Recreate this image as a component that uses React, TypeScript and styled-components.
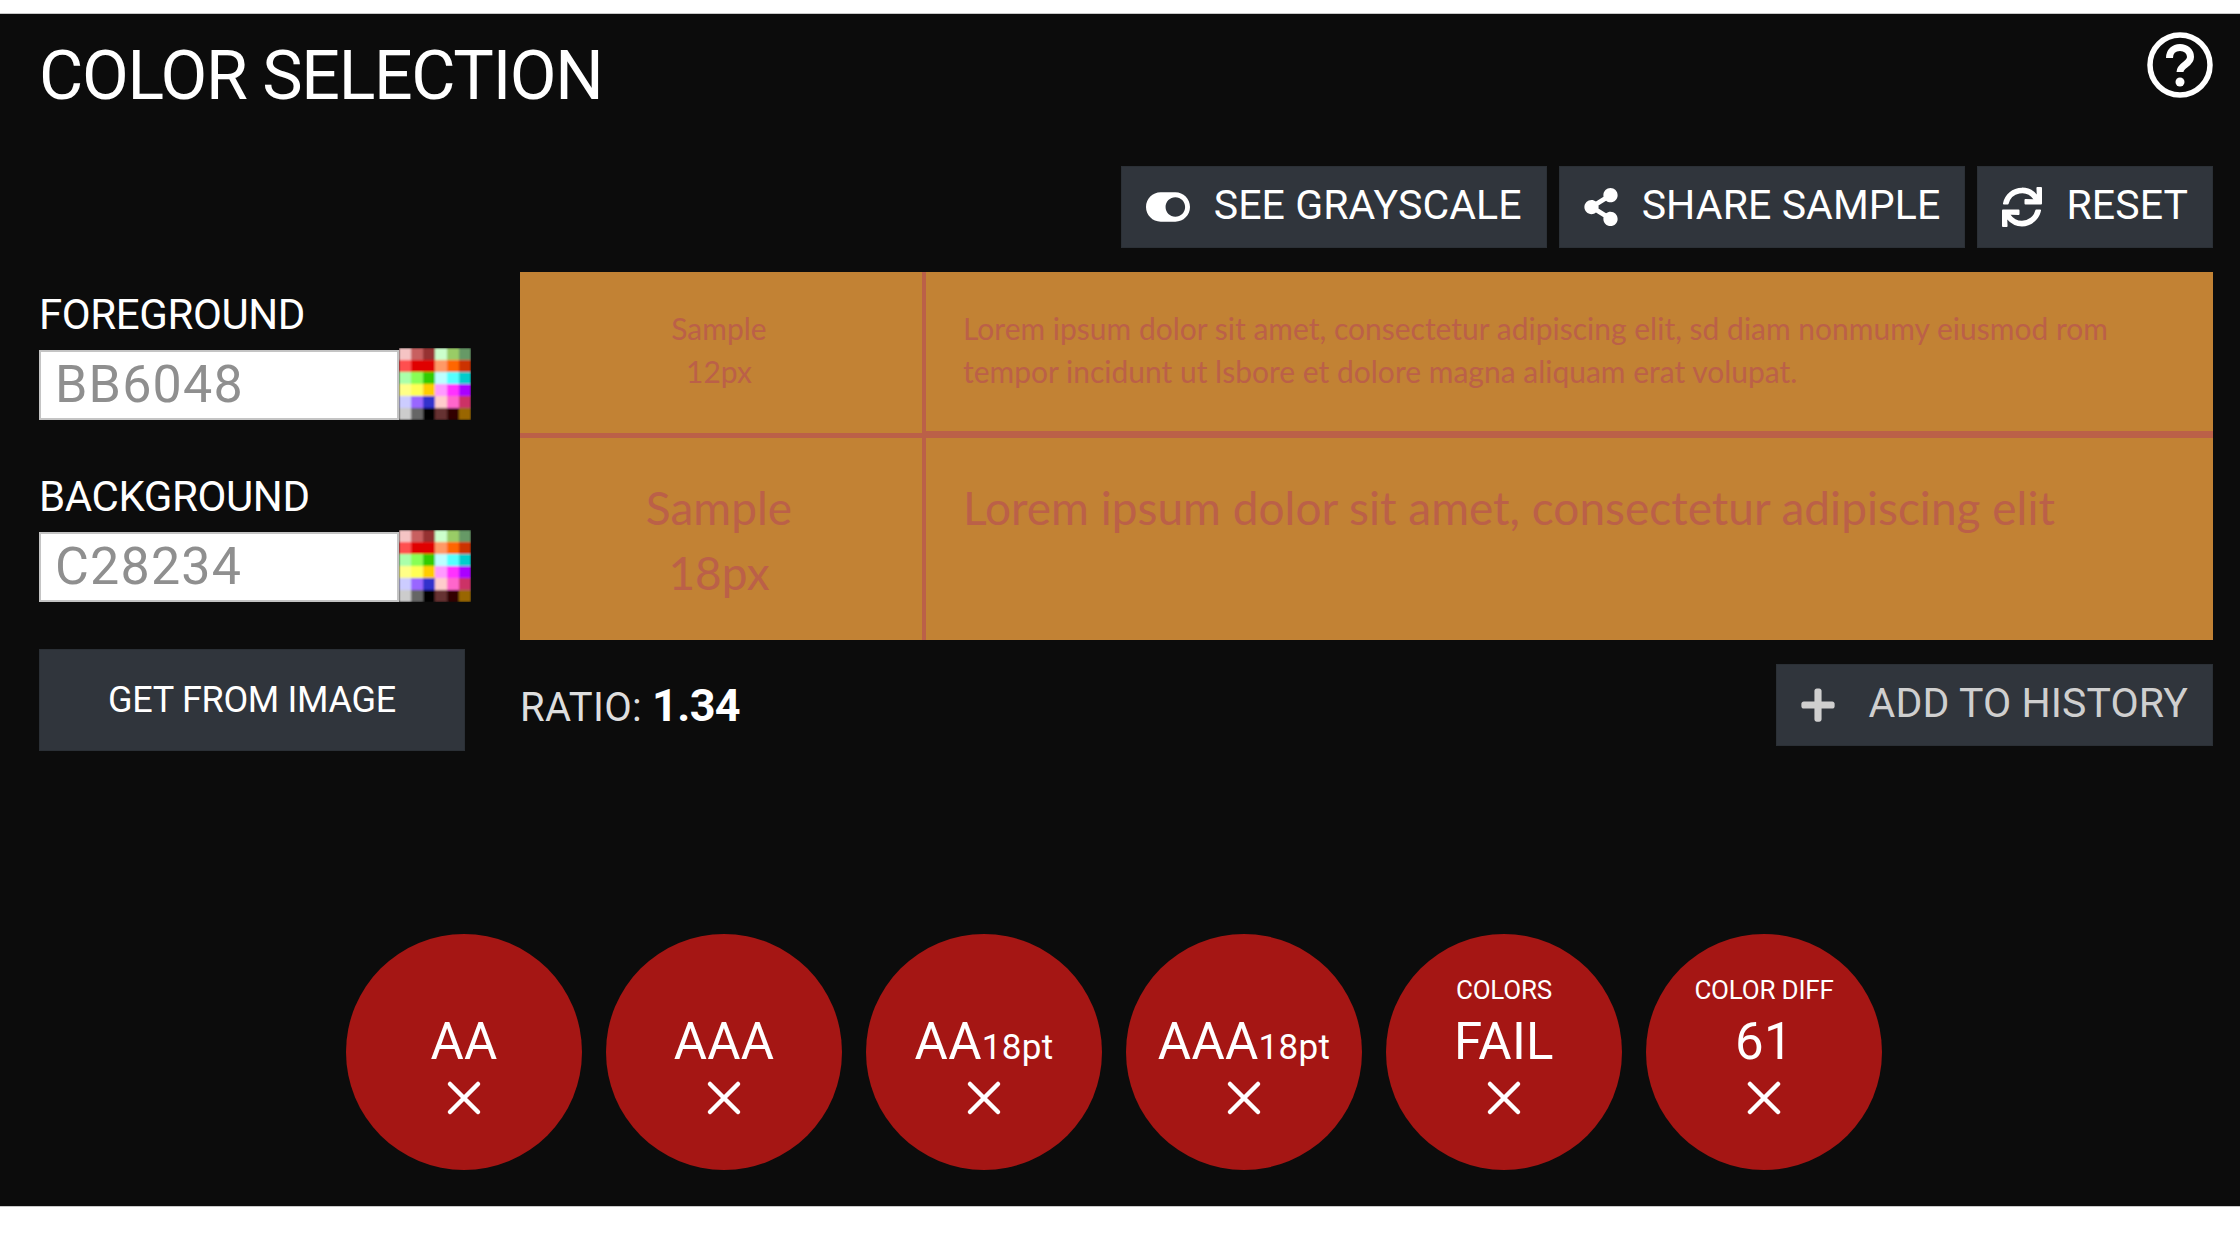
import React from "react";
import styled, { createGlobalStyle } from "styled-components";
import { FaToggleOn, FaShareAlt, FaSync, FaPlus } from "react-icons/fa";

const FONT = `"Roboto", "Liberation Sans", sans-serif`;
const SAMPLE_FONT = `"Lato", "Liberation Sans", sans-serif`;
const FG = "#bb6048";
const BG = "#c28234";

const GlobalStyle = createGlobalStyle`
  html, body {
    margin: 0;
    background: #ffffff;
    font-family: ${FONT};
  }
  * { box-sizing: border-box; }
`;

const Panel = styled.main`
  margin-top: 13px;
  height: 1194px;
  padding: 0 27px 0 39px;
  display: flex;
  flex-direction: column;
  background: #0c0c0c;
  border-top: 1px solid #c8c8c8;
  border-bottom: 1px solid #c8c8c8;
  color: #ffffff;
`;

const Header = styled.header`
  height: 152px;
  display: flex;
  justify-content: space-between;
  align-items: flex-start;
`;

const Title = styled.h1`
  margin: 27px 0 0;
  font-size: 68px;
  line-height: 70px;
  font-weight: 400;
  letter-spacing: -1.3px;
`;

const HelpLink = styled.a`
  display: block;
  width: 66px;
  height: 66px;
  margin-top: 18px;
  color: #ffffff;
`;

const Toolbar = styled.div`
  height: 82px;
  margin-bottom: 24px;
  display: flex;
  justify-content: flex-end;
  gap: 12px;
`;

const ActionButton = styled.button<{ $muted?: boolean; $lead?: number; $gap?: number }>`
  height: 82px;
  padding: 0 24px 4px ${(props) => props.$lead ?? 24}px;
  display: flex;
  align-items: center;
  gap: ${(props) => props.$gap ?? 24}px;
  border: 1px solid #2b3036;
  background: #30353c;
  color: ${(props) => (props.$muted ? "#cfcfcf" : "#ffffff")};
  font-family: ${FONT};
  font-size: 41px;
  font-weight: 400;
  letter-spacing: 0.1px;
  svg {
    flex: none;
    margin-top: 4px;
  }
`;

const Workspace = styled.section`
  display: flex;
  gap: 49px;
`;

const Sidebar = styled.div`
  width: 432px;
  flex: none;
  padding-top: 20px;
  display: flex;
  flex-direction: column;
  gap: 54px;
`;

const Field = styled.div``;

const FieldLabel = styled.label`
  display: block;
  height: 56px;
  font-size: 42px;
  line-height: 46px;
  letter-spacing: -0.4px;
`;

const FieldRow = styled.div`
  height: 72px;
  display: flex;
`;

const ColorInput = styled.input`
  width: 360px;
  height: 70px;
  margin-top: 2px;
  padding: 0 14px 2px;
  border: 2px solid #c4c4c4;
  background: #ffffff;
  color: #8f8f8f;
  font-family: ${FONT};
  font-size: 52px;
  letter-spacing: 1.2px;
  outline: none;
`;

const ImageButton = styled.button`
  width: 426px;
  height: 102px;
  margin-top: -7px;
  border: 1px solid #2b3036;
  background: #30353c;
  color: #ffffff;
  font-family: ${FONT};
  font-size: 36px;
  letter-spacing: -0.3px;
`;

const Main = styled.div`
  flex: 1;
  min-width: 0;
`;

const Sample = styled.div`
  height: 368px;
  background: ${BG};
  color: ${FG};
  font-family: ${SAMPLE_FONT};
`;

const SampleRow = styled.div<{ $large?: boolean }>`
  height: ${(props) => (props.$large ? "202px" : "166px")};
  display: grid;
  grid-template-columns: 406px 1fr;
  font-size: ${(props) => (props.$large ? "46px" : "30px")};
  line-height: ${(props) => (props.$large ? "65px" : "43px")};
`;

const SizeCell = styled.div<{ $large?: boolean }>`
  padding: ${(props) => (props.$large ? "37px" : "35px")} 4px 0 0;
  text-align: center;
  border-right: 4px solid ${FG};
  border-bottom: ${(props) => (props.$large ? "0" : `5px solid ${FG}`)};
`;

const TextCell = styled.div<{ $large?: boolean }>`
  padding: ${(props) => (props.$large ? "37px" : "35px")} 20px 0 37px;
  border-bottom: ${(props) => (props.$large ? "0" : `7px solid ${FG}`)};
`;

const ResultBar = styled.div`
  margin-top: 24px;
  display: flex;
  justify-content: space-between;
  align-items: center;
`;

const Ratio = styled.div`
  font-size: 40px;
  color: #dedede;
  letter-spacing: 0.3px;
  strong {
    margin-left: 10px;
    color: #ffffff;
    font-size: 45px;
    font-weight: 700;
    letter-spacing: -0.6px;
  }
`;

const Badges = styled.section`
  margin-top: 183px;
  padding-right: 24px;
  display: flex;
  justify-content: center;
  gap: 24px;
`;

const Badge = styled.div`
  width: 236px;
  height: 236px;
  position: relative;
  display: flex;
  flex-direction: column;
  align-items: center;
  border-radius: 50%;
  background: #a51614;
  color: #ffffff;
`;

const BadgeCaption = styled.div`
  position: absolute;
  top: 41px;
  font-size: 26px;
  line-height: 30px;
  letter-spacing: -0.2px;
`;

const BadgeValue = styled.div`
  margin-top: 79px;
  height: 58px;
  font-size: 51px;
  line-height: 58px;
  letter-spacing: 0.3px;
  small {
    font-size: 35px;
  }
`;

const FailMark = styled.svg`
  margin-top: 9px;
  width: 36px;
  height: 36px;
  color: #ffffff;
`;

const SWATCHES = [
  ["#f5c4c4", "#c86060", "#963232", "#ccffcc", "#99cc66", "#669966"],
  ["#ff5050", "#e00000", "#e00000", "#ff9966", "#ff6600", "#cc3300"],
  ["#aaffaa", "#88ff55", "#33cc00", "#bbffff", "#55ffff", "#00cccc"],
  ["#ffff88", "#ffff55", "#ffcc00", "#ff99ff", "#ff33ff", "#aa00ff"],
  ["#ccccff", "#9966ff", "#3333cc", "#ffcccc", "#ff66cc", "#cc3366"],
  ["#cccccc", "#666666", "#000000", "#663333", "#330000", "#996600"],
];

const Swatches = ({ id }: { id: string }) => (
  <svg width="72" height="72" viewBox="0 0 72 72">
    <filter id={id}>
      <feGaussianBlur stdDeviation="1.2" />
    </filter>
    <g filter={`url(#${id})`}>
      {SWATCHES.map((row, y) =>
        row.map((color, x) => (
          <rect key={`${x}-${y}`} x={x * 12} y={y * 12} width="12" height="12" fill={color} />
        ))
      )}
    </g>
  </svg>
);

const HelpIcon = () => (
  <svg viewBox="0 0 66 66" width="66" height="66" fill="none" stroke="currentColor">
    <circle cx="33" cy="33" r="30" strokeWidth="5.500" />
    <path d="M22.500 26c0-6.500 4.500-10.500 10.500-10.500S43.500 19.500 43.500 25c0 7.500-10.500 8-10.500 15" strokeWidth="7" />
    <circle cx="33" cy="50" r="4.500" fill="currentColor" stroke="none" />
  </svg>
);

const BADGES = [
  { value: "AA" },
  { value: "AAA" },
  { value: "AA", small: "18pt" },
  { value: "AAA", small: "18pt" },
  { value: "FAIL", caption: "COLORS" },
  { value: "61", caption: "COLOR DIFF" },
];

export default function App() {
  return (
    <>
      <GlobalStyle />
      <Panel>
        <Header>
          <Title>COLOR SELECTION</Title>
          <HelpLink>
            <HelpIcon />
          </HelpLink>
        </Header>
        <Toolbar>
          <ActionButton>
            <FaToggleOn size={44} />
            SEE GRAYSCALE
          </ActionButton>
          <ActionButton $lead={22} $gap={22}>
            <FaShareAlt size={38} />
            SHARE SAMPLE
          </ActionButton>
          <ActionButton>
            <FaSync size={40} />
            RESET
          </ActionButton>
        </Toolbar>
        <Workspace>
          <Sidebar>
            <Field>
              <FieldLabel>FOREGROUND</FieldLabel>
              <FieldRow>
                <ColorInput defaultValue="BB6048" />
                <Swatches id="fg-blur" />
              </FieldRow>
            </Field>
            <Field>
              <FieldLabel>BACKGROUND</FieldLabel>
              <FieldRow>
                <ColorInput defaultValue="C28234" />
                <Swatches id="bg-blur" />
              </FieldRow>
            </Field>
            <ImageButton>GET FROM IMAGE</ImageButton>
          </Sidebar>
          <Main>
            <Sample>
              <SampleRow>
                <SizeCell>
                  Sample
                  <br />
                  12px
                </SizeCell>
                <TextCell>
                  Lorem ipsum dolor sit amet, consectetur adipiscing elit, sd diam nonmumy eiusmod rom
                  <br />
                  tempor incidunt ut lsbore et dolore magna aliquam erat volupat.
                </TextCell>
              </SampleRow>
              <SampleRow $large>
                <SizeCell $large>
                  Sample
                  <br />
                  18px
                </SizeCell>
                <TextCell $large>Lorem ipsum dolor sit amet, consectetur adipiscing elit</TextCell>
              </SampleRow>
            </Sample>
            <ResultBar>
              <Ratio>
                RATIO:<strong>1.34</strong>
              </Ratio>
              <ActionButton $muted $lead={22} $gap={32}>
                <FaPlus size={38} />
                ADD TO HISTORY
              </ActionButton>
            </ResultBar>
          </Main>
        </Workspace>
        <Badges>
          {BADGES.map((badge) => (
            <Badge key={badge.value + (badge.small ?? "")}>
              {badge.caption && <BadgeCaption>{badge.caption}</BadgeCaption>}
              <BadgeValue>
                {badge.value}
                {badge.small && <small>{badge.small}</small>}
              </BadgeValue>
              <FailMark viewBox="0 0 36 36" fill="none" stroke="currentColor" strokeWidth="4.500" strokeLinecap="round">
                <path d="M4 4l28 28M32 4L4 32" />
              </FailMark>
            </Badge>
          ))}
        </Badges>
      </Panel>
    </>
  );
}
